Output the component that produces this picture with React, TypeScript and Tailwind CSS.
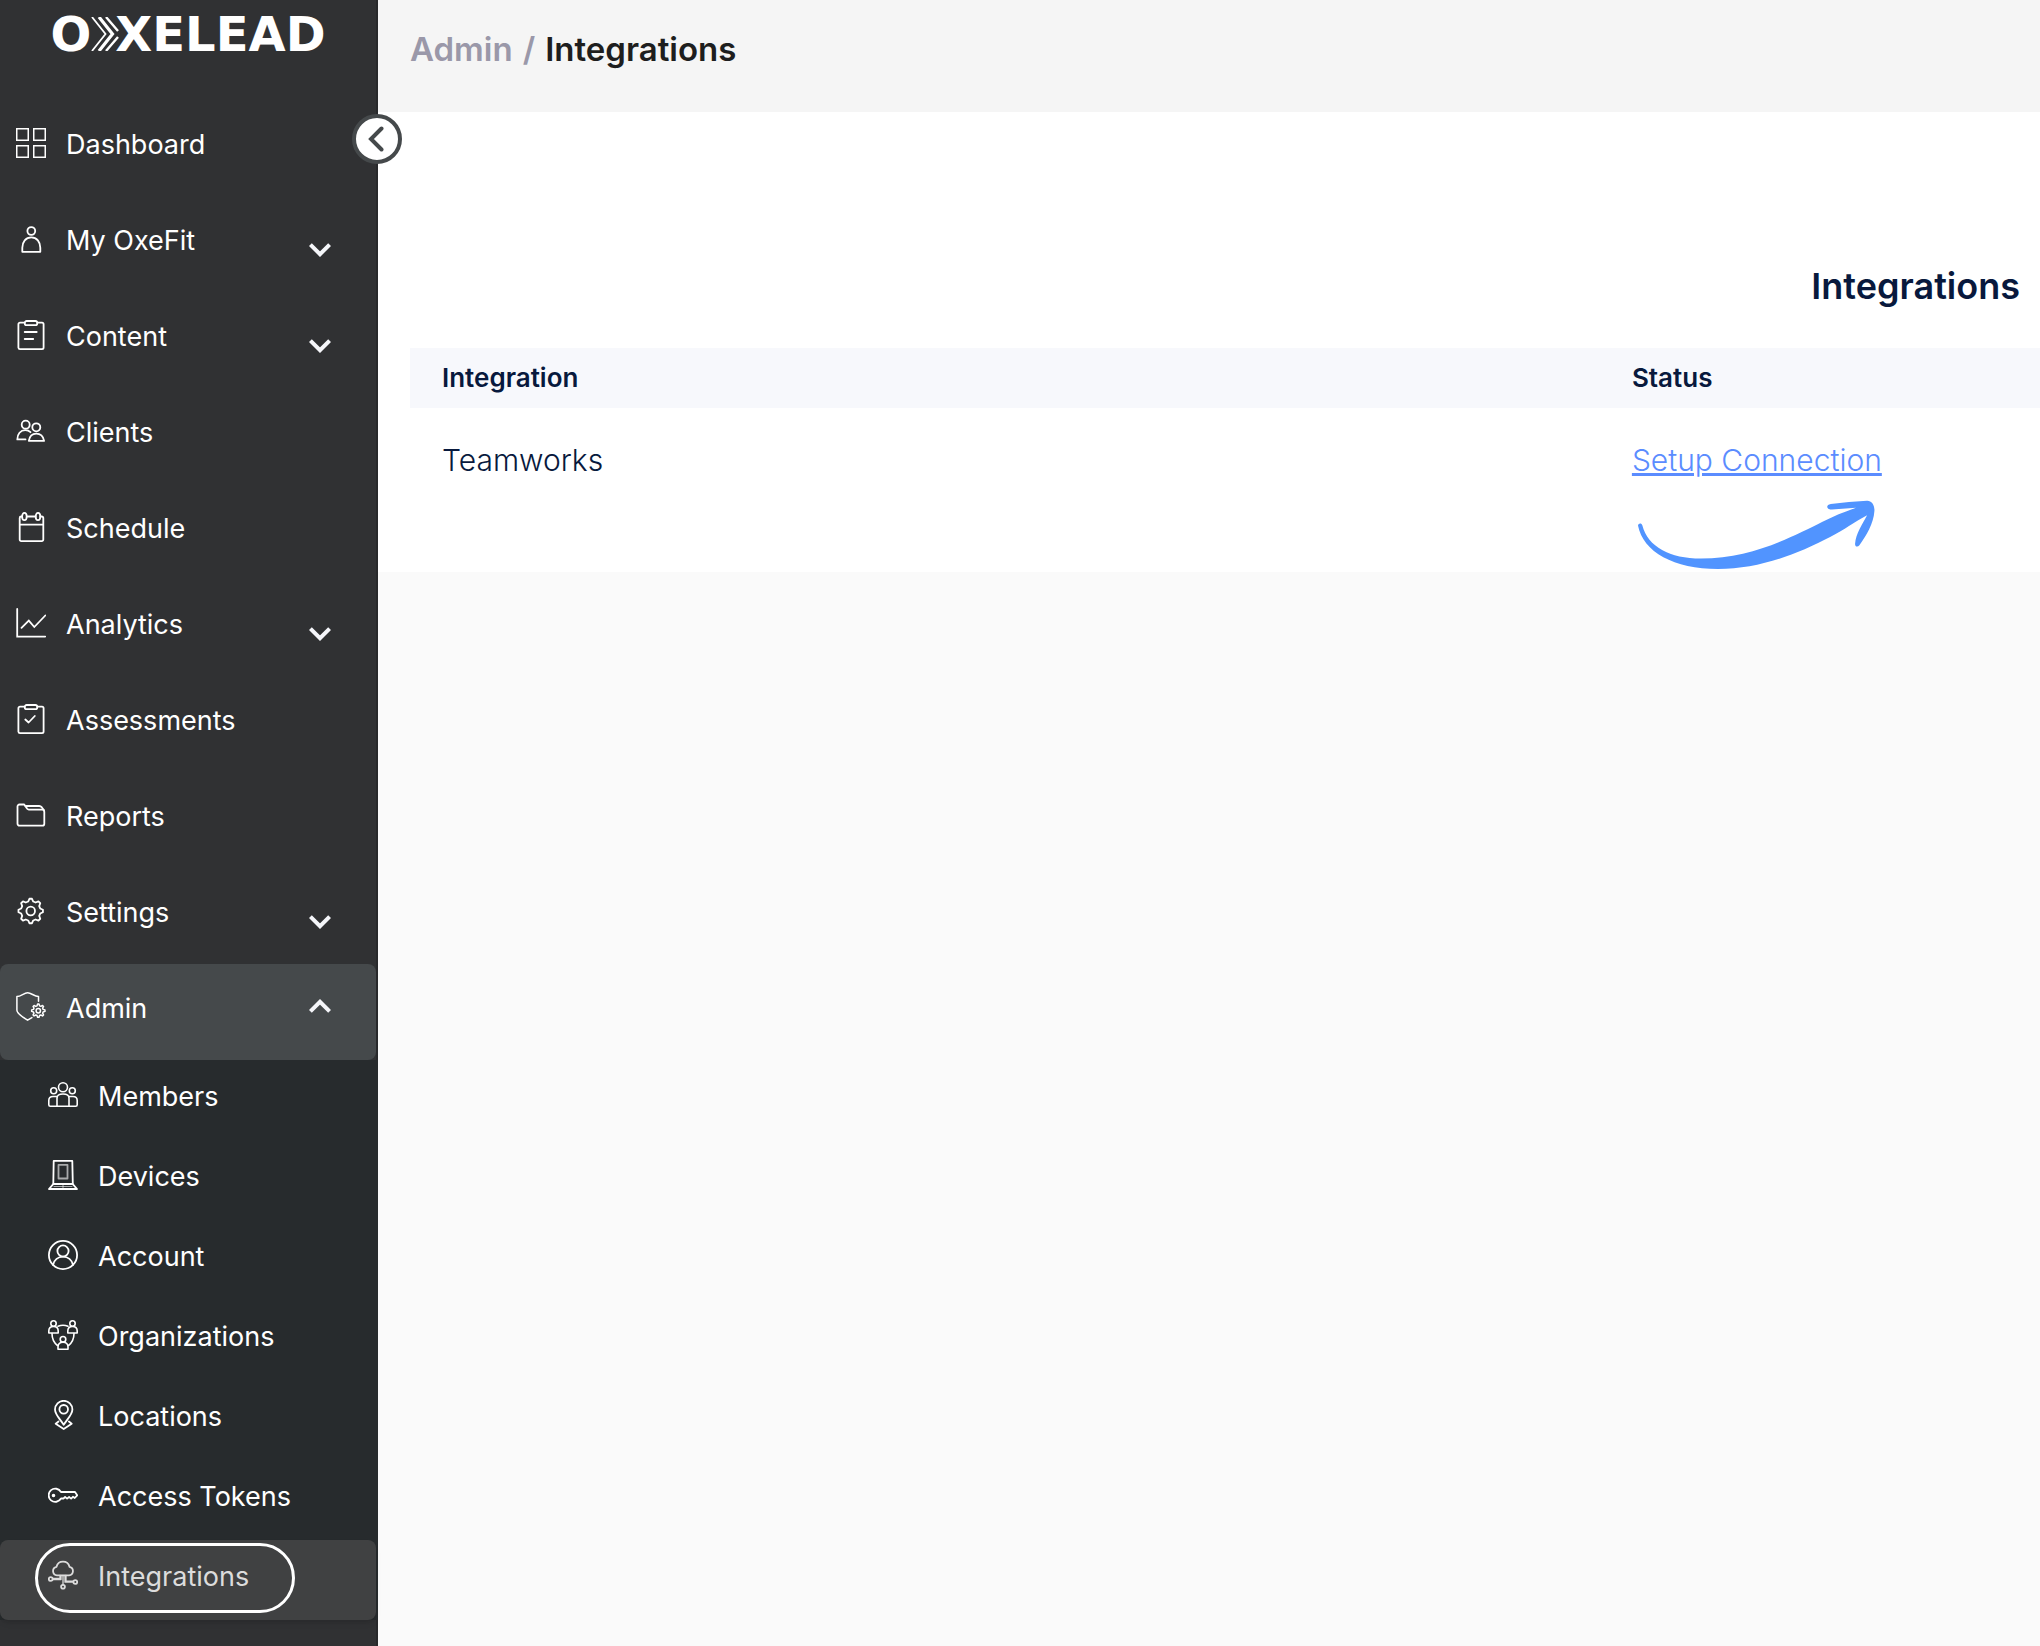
import type { ReactNode } from 'react';
import clsx from 'clsx';

interface NavItem {
  label: string;
  icon: ReactNode;
  chevron?: 'down' | 'up';
  active?: boolean;
}

// Closed cog outline with eight teeth
function gearPath(cx: number, cy: number, outer: number, inner: number) {
  const points: string[] = [];
  for (let i = 0; i < 8; i++) {
    const steps: [number, number][] = [[-15, inner], [-6, outer], [6, outer], [15, inner]];
    steps.forEach(([offset, r]) => {
      const a = ((i * 45 + offset) * Math.PI) / 180;
      points.push(`${(cx + r * Math.sin(a)).toFixed(2)} ${(cy - r * Math.cos(a)).toFixed(2)}`);
    });
  }
  return `M${points.join('L')}Z`;
}

function Icon({ children }: { children: ReactNode }) {
  return (
    <svg
      viewBox="0 0 30 30"
      className="size-[30px] shrink-0"
      fill="none"
      stroke="currentColor"
      strokeWidth="1.8"
      strokeLinecap="round"
      strokeLinejoin="round"
      aria-hidden="true"
    >
      {children}
    </svg>
  );
}

const clipboard = (
  <>
    <path d="M8.5 2.7H4a1.6 1.6 0 0 0-1.6 1.6v23.4A1.6 1.6 0 0 0 4 29.1h22a1.6 1.6 0 0 0 1.6-1.6V4.3A1.6 1.6 0 0 0 26 2.7h-4.5" />
    <rect x="8.8" y="1" width="12.4" height="4.2" rx="1.8" />
  </>
);

const navItems: NavItem[] = [
  {
    label: 'Dashboard',
    icon: (
      <g strokeLinejoin="miter" strokeWidth="1.5">
        <rect x="0.75" y="0.75" width="11.5" height="11.5" />
        <rect x="17.75" y="0.75" width="11.5" height="11.5" />
        <rect x="0.75" y="17.75" width="11.5" height="11.5" />
        <rect x="17.75" y="17.75" width="11.5" height="11.5" />
      </g>
    ),
  },
  {
    label: 'My OxeFit',
    chevron: 'down',
    icon: (
      <>
        <circle cx="15.3" cy="7" r="3.9" />
        <path d="M6.3 27.8v-4c0-6 3.5-10.5 9-10.5s9 4.5 9 10.5v4z" />
      </>
    ),
  },
  {
    label: 'Content',
    chevron: 'down',
    icon: (
      <>
        {clipboard}
        <path d="M8.7 12h12M8.7 19h8.5" />
      </>
    ),
  },
  {
    label: 'Clients',
    icon: (
      <>
        <circle cx="9.7" cy="8.7" r="4" />
        <circle cx="20.3" cy="11.3" r="4" />
        <path d="M9.5 23.4H1.300c0-5.400 3.200-9.200 8-9.200 2.300 0 4 .8 5.200 2" />
        <path d="M12.8 24.8c.8-4.600 3.700-7.200 7.500-7.200s6.900 2.600 7.800 7.200z" />
      </>
    ),
  },
  {
    label: 'Schedule',
    icon: (
      <>
        <path d="M6 4.5H5.200A1.500 1.500 0 0 0 3.700 6v21.600a1.500 1.500 0 0 0 1.500 1.500h20.600a1.500 1.500 0 0 0 1.500-1.500V6a1.500 1.500 0 0 0-1.500-1.500h-1.500M10.800 4.500h8.800M3.700 12.700h23.600" />
        <ellipse cx="8.4" cy="4.5" rx="2.3" ry="3.6" />
        <ellipse cx="22" cy="4.5" rx="2.3" ry="3.6" />
      </>
    ),
  },
  {
    label: 'Analytics',
    chevron: 'down',
    icon: (
      <g strokeLinejoin="miter">
        <path d="M1.200 1v27.600h28" />
        <path d="M5.500 19.800l7.300-7.200 5.500 6.400 11-11.500" />
      </g>
    ),
  },
  {
    label: 'Assessments',
    icon: (
      <>
        {clipboard}
        <path d="M9.300 15.500l3.300 3 6.200-6.500" />
      </>
    ),
  },
  {
    label: 'Reports',
    icon: (
      <>
        <path d="M1.500 23.700V6.500a2 2 0 0 1 2-2h4.700l3 4.300a2 2 0 0 0 1.600.8H26a2.300 2.300 0 0 1 2.300 2.300v11.800a2 2 0 0 1-2 2H3.500a2 2 0 0 1-2-2z" />
        <path d="M9.500 6h13.700c1 0 1.800.4 2.500 1.200l2.300 3" />
      </>
    ),
  },
  {
    label: 'Settings',
    chevron: 'down',
    icon: (
      <>
        <path d={gearPath(14.7, 15, 12.3, 9.8)} />
        <circle cx="14.7" cy="15" r="4.3" />
      </>
    ),
  },
  {
    label: 'Admin',
    chevron: 'up',
    active: true,
    icon: (
      <g strokeWidth="1.5">
        <path d="M22.500 9.300V4.600C18 4.300 15.200.8 11.600.8S5.200 4.300.9 4.600v13.600c0 3.600 6.400 7.100 10.700 10l4.300-2.600" />
        <path d={gearPath(22.3, 18.7, 6.7, 5)} />
        <circle cx="22.3" cy="18.7" r="2.2" />
      </g>
    ),
  },
];

const adminItems: NavItem[] = [
  {
    label: 'Members',
    icon: (
      <g strokeWidth="1.600">
        <circle cx="15" cy="7.3" r="4.5" />
        <circle cx="5.7" cy="10.7" r="3" />
        <circle cx="24.3" cy="10.7" r="3" />
        <path d="M9 26.200V18c0-2.500 2-4 6-4s6 1.500 6 4v8.200" />
        <path d="M8.800 16.500H5c-2.700 0-4.200 1.500-4.200 4v4.200c0 1 .5 1.500 1.500 1.500h25.400c1 0 1.500-.5 1.500-1.500v-4.200c0-2.500-1.500-4-4.200-4h-3.800" />
      </g>
    ),
  },
  {
    label: 'Devices',
    icon: (
      <>
        <path d="M5.300 23.700L5.700.9h18.600l.5 22.800" />
        <path d="M5.300 24h19.400M5 24.300L1 29h28l-4-4.700" />
        <path d="M15 24.500V28M6 26.500h18" strokeWidth="1" opacity="0.6" />
        <rect x="10.5" y="4.8" width="9" height="13.7" opacity="0.6" />
      </>
    ),
  },
  {
    label: 'Account',
    icon: (
      <>
        <circle cx="15" cy="15" r="14.1" />
        <circle cx="15" cy="11" r="5.6" />
        <path d="M5 25c1.200-4.800 5-8.300 10-8.300s8.800 3.500 10 8.300" />
      </>
    ),
  },
  {
    label: 'Organizations',
    icon: (
      <g strokeWidth="1.600">
        <circle cx="5.5" cy="3.5" r="2.7" />
        <circle cx="24.5" cy="3.5" r="2.7" />
        <path d="M.8 13v-2c0-2.800 1.800-4.500 4.700-4.500s4.700 1.700 4.700 4.500v2zM19.800 13v-2c0-2.800 1.800-4.500 4.700-4.500s4.700 1.700 4.700 4.500v2z" />
        <path d="M10 6.300c3-1.300 7-1.300 10 0M4 13.500c0 5 2 9.300 5.500 12M26 13.500c0 5-2 9.300-5.500 12" />
        <circle cx="15" cy="19.3" r="2.8" />
        <path d="M10 29.200V27c0-2.800 1.800-4.800 5-4.800s5 2 5 4.800v2.200z" />
      </g>
    ),
  },
  {
    label: 'Locations',
    icon: (
      <>
        <path d="M15.700 24.800C12 19 7 14.500 7 9.500a8.700 8.700 0 0 1 17.400 0c0 5-5 9.500-8.700 15.300z" />
        <circle cx="15.7" cy="9.3" r="4.3" />
        <path d="M10.500 21.500l-2.800 2.200 8 5.300 8-5.300-2.800-2.200" />
      </>
    ),
  },
  {
    label: 'Access Tokens',
    icon: (
      <>
        <path d="M13 12h14l2.200 3.300-2.500 2.700-1.800-1.200-1.800 1.800-2-1.600-2 1.600-2-1.600-1.600 1.500H13a6.600 6.600 0 1 1 0-6.500z" />
        <circle cx="5.5" cy="15.5" r="0.9" fill="currentColor" />
      </>
    ),
  },
  {
    label: 'Integrations',
    active: true,
    icon: (
      <>
        <path d="M9 15.300a4.300 4.300 0 0 1-.5-8.500 6.700 6.700 0 0 1 13 0 4.300 4.300 0 0 1-.5 8.500z" />
        <path d="M4.800 18.500H12v-3M15 15.500v9M18 15.500v5.700h7M4.800 19.500H13v-4M17 15.500v6.700h8" strokeWidth="1.300" />
        <circle cx="2.7" cy="19" r="1.9" />
        <circle cx="27.3" cy="22" r="1.9" />
        <circle cx="15" cy="26.7" r="1.9" />
      </>
    ),
  },
];

function Chevron({ direction }: { direction: 'down' | 'up' }) {
  return (
    <svg
      viewBox="0 0 22 14"
      className={clsx('w-[22px] h-[14px] shrink-0', direction === 'down' ? 'mt-3' : 'mb-3 rotate-180')}
      fill="none"
      stroke="#f5f6fa"
      strokeWidth="4"
      aria-hidden="true"
    >
      <path d="M1.400 1.600L11 11.200l9.600-9.600" />
    </svg>
  );
}

function Logo() {
  return (
    <a
      href="#home"
      aria-label="OXELEAD"
      className="flex h-[100px] items-start justify-center pt-2 font-['DejaVu_Sans',sans-serif] text-[48px] leading-[52px] font-bold text-white"
    >
      <span>O</span>
      {/* speed chevrons running into the X */}
      <svg viewBox="0 0 30 34" className="mt-[9px] -mr-1.5 h-[34px] w-[30px]" fill="none" stroke="currentColor" aria-hidden="true">
        <path d="M1 0l13.500 17L1 34" strokeWidth="1.800" />
        <path d="M8 0l13.500 17L8 34" strokeWidth="3.200" />
        <path d="M15 0l12 14M15 34l12-14" strokeWidth="2.400" />
      </svg>
      <span>XELEAD</span>
    </a>
  );
}

function Sidebar() {
  return (
    <aside className="relative w-[378px] shrink-0 border-r-2 border-[#28292b] bg-[#303133] text-[27px] leading-8 text-white">
      <Logo />
      <button
        type="button"
        aria-label="Collapse menu"
        className="absolute top-[114px] -right-[26px] z-10 flex size-[50px] items-center justify-center rounded-full border-4 border-[#45494b] bg-white"
      >
        <svg viewBox="0 0 16 26" className="mr-0.5 h-[26px] w-4" fill="none" stroke="#45494b" strokeWidth="4" strokeLinecap="round" aria-hidden="true">
          <path d="M13.500 2.500L3 13l10.500 10.500" />
        </svg>
      </button>

      <nav>
        {navItems.map((item) => (
          <a
            key={item.label}
            href={`#${item.label}`}
            className={clsx('flex h-24 items-center rounded-lg pr-[45px] pl-4', item.active && 'bg-[#45494b]')}
          >
            <span className="flex grow items-center gap-5 pb-2.5">
              <Icon>{item.icon}</Icon>
              <span className="pt-1">{item.label}</span>
            </span>
            {item.chevron && <Chevron direction={item.chevron} />}
          </a>
        ))}

        <div className="-mr-0.5 bg-[#272b2d]">
          {adminItems.map((item) => (
            <a
              key={item.label}
              href={`#${item.label}`}
              className={clsx(
                'relative mr-0.5 flex h-20 items-center gap-5 rounded-lg pb-2.5 pl-12',
                item.active && 'bg-[#404142] text-[#dcdcdc] shadow-md'
              )}
            >
              <Icon>{item.icon}</Icon>
              <span className="pt-1">{item.label}</span>
              {item.active && (
                <span className="absolute top-[3px] left-[35px] h-[70px] w-[260px] rounded-full border-[3px] border-white" />
              )}
            </a>
          ))}
        </div>
      </nav>
    </aside>
  );
}

export default function App() {
  return (
    <div className="flex min-h-screen bg-[#fafafa] font-[Inter,sans-serif]">
      <Sidebar />

      <main className="min-w-0 grow">
        <header className="flex h-28 items-start bg-[#f5f5f5] px-8 pt-[29px] text-[33px] leading-10 font-semibold">
          <nav aria-label="Breadcrumb" className="flex gap-2.5">
            <a href="#Admin" className="text-[#9a98a9]">Admin</a>
            <span className="text-[#9a98a9]">/</span>
            <span className="text-[#1e1e1e]">Integrations</span>
          </nav>
        </header>

        <section className="h-[460px] bg-white pt-[150px] pl-8 text-[#08193d]">
          <h1 className="mb-[38px] pr-5 text-right text-[36px] leading-[48px] font-semibold">Integrations</h1>

          <table className="w-full table-fixed text-left">
            <thead>
              <tr className="h-[60px] bg-[#f7f8fc] text-[26px] leading-8">
                <th className="w-[73%] pl-8 font-semibold">Integration</th>
                <th className="pl-8 font-semibold">Status</th>
              </tr>
            </thead>
            <tbody>
              <tr className="align-top text-[30px] leading-9 font-light">
                <td className="pt-[34px] pl-8">Teamworks</td>
                <td className="pt-[34px] pl-8">
                  <a href="#setup" className="text-[#5b8cff] underline decoration-[3px]">
                    Setup Connection
                  </a>
                  {/* hand-drawn arrow pointing back at the link */}
                  <svg viewBox="0 0 238 70" className="mt-[22px] ml-1.5 h-[70px] w-[238px]" fill="#5194ff" aria-hidden="true">
                    <path d="M0 25.500c.3-2.600 3.600-2.800 4.300-.3C10 47 32 58.500 63 58.500c50 0 92-22 121-36.500 12-6 22-10 34-14.300l-24 1.800c-5.800.4-6.500-5-1.200-5.600C205 2.500 217 1.500 229 .8c4.500-.2 7.800 4.200 7.400 10.200-.8 12.500-8 24.500-15 34.200-2 2.500-4.700 1.400-4.300-1.800.8-9.400 7-19 12-28.200-12 6.300-23 14.600-37 21.800C158 55 120 69 80 69 36 69 5 52 0 25.500z" />
                  </svg>
                </td>
              </tr>
            </tbody>
          </table>
        </section>
      </main>
    </div>
  );
}
